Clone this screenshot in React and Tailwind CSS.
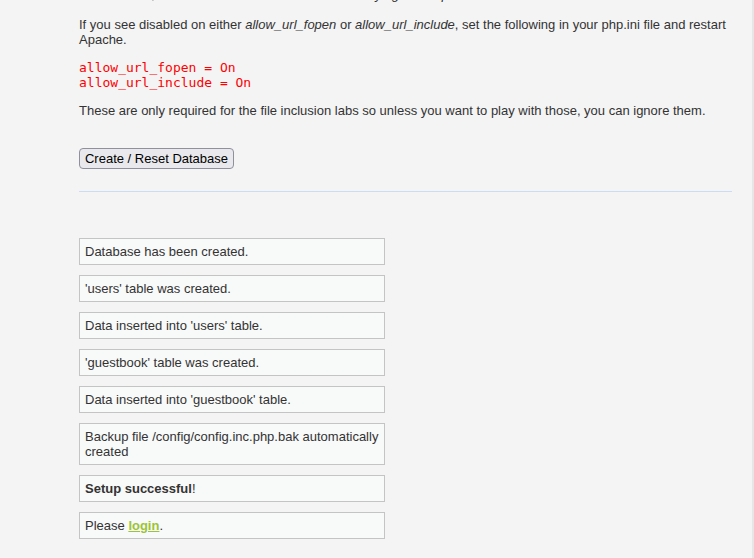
import React from 'react';

const messages = [
  { text: 'Database has been created.' },
  { text: "'users' table was created." },
  { text: "Data inserted into 'users' table." },
  { text: "'guestbook' table was created." },
  { text: "Data inserted into 'guestbook' table." },
  { text: 'Backup file /config/config.inc.php.bak automatically created' },
];

const MessageBox = ({ children }) => (
  <div className="w-[306px] border border-[#c4c4c4] bg-[#f8f9f9] px-[5px] py-[5px] leading-[15px]">
    {children}
  </div>
);

export default function App() {
  return (
    <div className="flex min-h-[558px] w-full overflow-hidden bg-[#f4f4f4] font-['Liberation_Sans',Arial,sans-serif] text-[13px] leading-[15px] text-[#333]">
      <main className="flex-1 pl-[79px] pr-[20px] pb-[19px]">
        {/* previous line, scrolled mostly out of view */}
        <p className="-mt-[13px] italic">
          <span className="text-[#ff0000]">Status in red</span>, indicate there will be an issue when trying to complete some modules.
        </p>

        <p className="mt-[15px]">
          If you see disabled on either <i>allow_url_fopen</i> or <i>allow_url_include</i>, set the following in your php.ini file and restart Apache.
        </p>

        <pre className="mt-[13px] font-['DejaVu_Sans_Mono',monospace] text-[13px] leading-[15px] text-[#ff0000]">
          {'allow_url_fopen = On\nallow_url_include = On'}
        </pre>

        <p className="mt-[13px]">
          These are only required for the file inclusion labs so unless you want to play with those, you can ignore them.
        </p>

        <button
          type="button"
          className="mt-[30px] flex h-[21px] w-[155px] items-center justify-center rounded-[4px] border border-[#8f8f9d] bg-[#e9e9ed] text-[13px] text-black"
        >
          Create / Reset Database
        </button>

        <hr className="mt-[22px] border-0 border-t border-[#cddcf5]" />

        <div className="mt-[46px] flex flex-col gap-[10px]">
          {messages.map((m) => (
            <MessageBox key={m.text}>{m.text}</MessageBox>
          ))}
          <MessageBox>
            <b>Setup successful</b>!
          </MessageBox>
          <MessageBox>
            Please <a href="#" className="font-bold text-[#9cc437] underline">login</a>.
          </MessageBox>
        </div>
      </main>
      <div className="w-[2px] shrink-0 bg-[#e6e6e6]" />
    </div>
  );
}
